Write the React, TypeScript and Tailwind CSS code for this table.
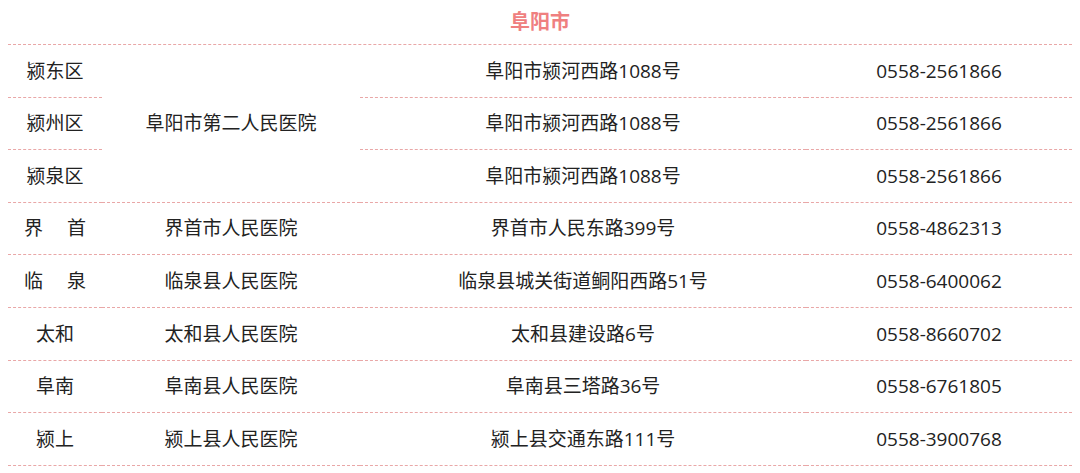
import React from "react";

const font = '"Open Sans", "Noto Sans CJK SC", sans-serif';

type Row = { d: React.ReactNode; h?: string; a: string; p: string };

const cell =
  "flex items-center justify-center border-b border-dashed border-[#e9a7a7] text-[19px] text-[#222222] whitespace-nowrap";

function Spread({ a, b }: { a: string; b: string }) {
  return (
    <span className="flex gap-[24px]">
      <span>{a}</span>
      <span>{b}</span>
    </span>
  );
}

export default function App() {
  const rows: Row[] = [
    { d: "界首", h: "界首市人民医院", a: "界首市人民东路399号", p: "0558-4862313" },
    { d: "临泉", h: "临泉县人民医院", a: "临泉县城关街道鲖阳西路51号", p: "0558-6400062" },
    { d: "太和", h: "太和县人民医院", a: "太和县建设路6号", p: "0558-8660702" },
    { d: "阜南", h: "阜南县人民医院", a: "阜南县三塔路36号", p: "0558-6761805" },
    { d: "颍上", h: "颍上县人民医院", a: "颍上县交通东路111号", p: "0558-3900768" },
  ];
  return (
    <div className="w-[1080px] h-[473px] bg-white" style={{ fontFamily: font }}>
      <div className="h-[44px] flex items-center justify-center text-[20px] font-bold text-[#ef8080]">
        阜阳市
      </div>
      <div className="mx-[8px] border-t border-dashed border-[#e9a7a7] grid grid-cols-[94px_258px_446px_266px] auto-rows-[52.6px]">
        <div className={cell}>颍东区</div>
        <div className={cell + " row-span-3"}>阜阳市第二人民医院</div>
        <div className={cell}>阜阳市颍河西路1088号</div>
        <div className={cell}>0558-2561866</div>
        <div className={cell}>颍州区</div>
        <div className={cell}>阜阳市颍河西路1088号</div>
        <div className={cell}>0558-2561866</div>
        <div className={cell}>颍泉区</div>
        <div className={cell}>阜阳市颍河西路1088号</div>
        <div className={cell}>0558-2561866</div>
        {rows.map((r, i) => (
          <React.Fragment key={i}>
            <div className={cell}>
              {i < 2 ? <Spread a={(r.d as string)[0]} b={(r.d as string)[1]} /> : r.d}
            </div>
            <div className={cell}>{r.h}</div>
            <div className={cell}>{r.a}</div>
            <div className={cell}>{r.p}</div>
          </React.Fragment>
        ))}
      </div>
    </div>
  );
}
